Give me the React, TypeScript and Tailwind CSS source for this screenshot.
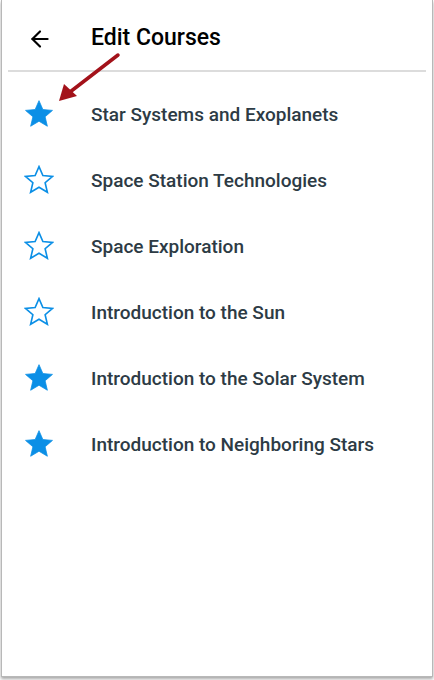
import { ArrowLeft } from 'lucide-react';

const courses = [
  { name: 'Star Systems and Exoplanets', fav: true },
  { name: 'Space Station Technologies', fav: false },
  { name: 'Space Exploration', fav: false },
  { name: 'Introduction to the Sun', fav: false },
  { name: 'Introduction to the Solar System', fav: true },
  { name: 'Introduction to Neighboring Stars', fav: true },
];

const Star = ({ filled }: { filled: boolean }) => (
  <svg width="30" height="29" viewBox="0 0 24 23">
    <path
      d="M12 1.2l3.1 7.1 7.7.7-5.9 5.1 1.8 7.6L12 17.7l-6.7 4 1.8-7.6L1.2 9l7.7-.7z"
      fill={filled ? '#0b8fe6' : 'none'}
      stroke="#0b8fe6"
      strokeWidth={filled ? 0.6 : 1.3}
      strokeLinejoin="miter"
    />
  </svg>
);

export default function App() {
  return (
    <div className="relative h-[680px] w-[434px] bg-white px-[1px] pb-[3px]" style={{ fontFamily: 'Roboto, "Liberation Sans", sans-serif' }}>
      <div className="h-full w-full border-x border-b border-[#b8b8b8] bg-white shadow-[0_2px_3px_rgba(0,0,0,0.35)]">
        {/* Header */}
        <div className="flex h-[70px] items-center pt-[7px]">
          <div className="flex w-[89px] justify-start pl-[25px]">
            <ArrowLeft className="h-[26px] w-[26px] text-black" strokeWidth={2} />
          </div>
          <h1 className="text-[23px] font-medium text-black">Edit Courses</h1>
        </div>
        <div className="mx-[6px] h-[2px] bg-[#dcdcdc]" />

        {/* Course list */}
        <ul className="pt-[8px]">
          {courses.map(c => (
            <li key={c.name} className="flex h-[66px] items-center">
              <div className="flex w-[89px] justify-start pl-[22px]">
                <Star filled={c.fav} />
              </div>
              <span className="mt-[4px] text-[19px] font-medium text-[#2d3b45]">{c.name}</span>
            </li>
          ))}
        </ul>
      </div>

      {/* Annotation arrow */}
      <svg className="pointer-events-none absolute left-0 top-0" width="434" height="680">
        <line x1="118" y1="55" x2="70" y2="92" stroke="#a3121a" strokeWidth="3.5" strokeLinecap="round" />
        <polygon points="59,101 64,84 77,96" fill="#a3121a" />
      </svg>
    </div>
  );
}
